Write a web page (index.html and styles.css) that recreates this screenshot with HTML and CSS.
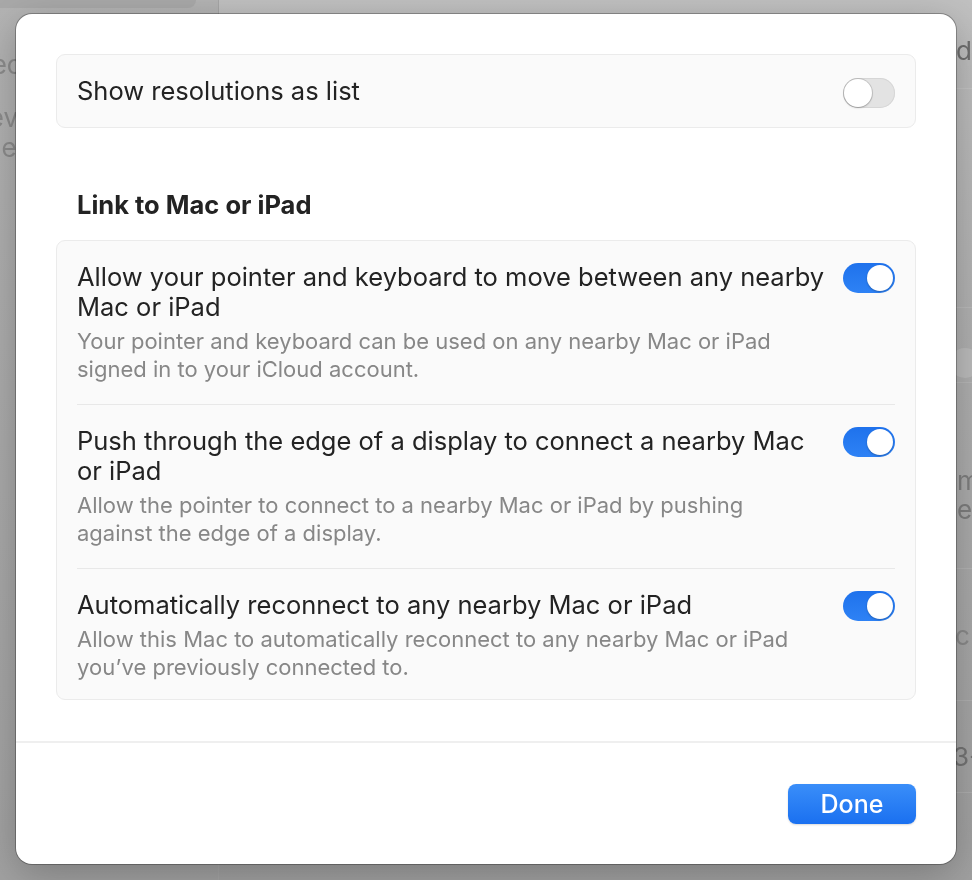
FILE: index.html
```html
<!DOCTYPE html>
<html lang="en">
<head>
    <meta charset="UTF-8">
    <title>Displays - Advanced</title>
    <link rel="stylesheet" href="styles.css">
</head>
<body>

    <!-- Dimmed settings window behind the sheet -->
    <div class="backdrop">
        <div class="backdrop-sidebar">
            <div class="sidebar-selected"></div>
        </div>
        <div class="backdrop-main">
            <div class="backdrop-line line-a"></div>
            <div class="backdrop-line line-b"></div>
            <div class="backdrop-line line-c"></div>
            <div class="backdrop-line line-d"></div>
            <div class="backdrop-line line-e"></div>
            <div class="backdrop-line line-f"></div>
            <div class="backdrop-knob"></div>
        </div>
        <span class="ghost ghost-1">Sec</span>
        <span class="ghost ghost-2">Dev</span>
        <span class="ghost ghost-3">Ne</span>
        <span class="ghost ghost-4">Add</span>
        <span class="ghost ghost-5">m</span>
        <span class="ghost ghost-6">er</span>
        <span class="ghost ghost-7">c</span>
        <span class="ghost ghost-8">3-</span>
    </div>

    <!-- Sheet -->
    <div class="sheet">
        <div class="sheet-body">
            <div class="card">
                <div class="row row-single">
                    <div class="row-text">
                        <div class="row-title">Show resolutions as list</div>
                    </div>
                    <div class="toggle"><span class="knob"></span></div>
                </div>
            </div>

            <h3 class="section-title">Link to Mac or iPad</h3>

            <div class="card">
                <div class="row">
                    <div class="row-text">
                        <div class="row-title">Allow your pointer and keyboard to move between any nearby Mac or iPad</div>
                        <div class="row-desc">Your pointer and keyboard can be used on any nearby Mac or iPad signed in to your iCloud account.</div>
                    </div>
                    <div class="toggle on"><span class="knob"></span></div>
                </div>
                <div class="row">
                    <div class="row-text">
                        <div class="row-title">Push through the edge of a display to connect a nearby Mac or iPad</div>
                        <div class="row-desc">Allow the pointer to connect to a nearby Mac or iPad by pushing against the edge of a display.</div>
                    </div>
                    <div class="toggle on"><span class="knob"></span></div>
                </div>
                <div class="row">
                    <div class="row-text">
                        <div class="row-title">Automatically reconnect to any nearby Mac or iPad</div>
                        <div class="row-desc">Allow this Mac to automatically reconnect to any nearby Mac or iPad you’ve previously connected to.</div>
                    </div>
                    <div class="toggle on"><span class="knob"></span></div>
                </div>
            </div>
        </div>

        <div class="sheet-footer">
            <button class="btn-done">Done</button>
        </div>
    </div>

</body>
</html>
```

FILE: styles.css
```css
/* General */
body {
    margin: 0;
    width: 972px;
    height: 880px;
    overflow: hidden;
    font-family: Inter, "Open Sans", sans-serif;
    background: #a9a9a9;
}

/* Backdrop window */
.backdrop {
    position: fixed;
    inset: 0;
    display: flex;
}

.backdrop-sidebar {
    width: 218px;
    background: linear-gradient(#b4b4b4, #a2a2a2);
    border-right: 1px solid #a6a6a6;
}

.sidebar-selected {
    width: 196px;
    height: 10px;
    margin-top: -2px;
    background: #a9a9a9;
    border-radius: 0 0 8px 0;
}

.backdrop-main {
    flex: 1;
    position: relative;
    background: linear-gradient(#c1c1c1, #b0b0b0 40%, #a1a1a1);
}

.backdrop-line {
    position: absolute;
    left: 0;
    right: 0;
    height: 1px;
    background: rgba(255, 255, 255, 0.12);
}

.line-a { top: 88px; }
.line-b { top: 307px; }
.line-c { top: 382px; }
.line-d { top: 568px; }
.line-e { top: 700px; }
.line-f { top: 792px; }

.backdrop-knob {
    position: absolute;
    right: -8px;
    top: 348px;
    width: 30px;
    height: 30px;
    border-radius: 50%;
    background: #bcbcbc;
}

.ghost {
    position: absolute;
    font-size: 26px;
    color: #8c8c8c;
    line-height: 30px;
}

.ghost-1 { left: -25px; top: 50px; }
.ghost-2 { left: -30px; top: 103px; }
.ghost-3 { left: -18px; top: 133px; }
.ghost-4 { left: 938px; top: 36px; color: #6e6e6e; }
.ghost-5 { left: 957px; top: 466px; color: #7e7e7e; }
.ghost-6 { left: 957px; top: 495px; color: #7e7e7e; }
.ghost-7 { left: 955px; top: 621px; color: #8a8a8a; }
.ghost-8 { left: 953px; top: 742px; color: #747474; }

/* Sheet */
.sheet {
    position: absolute;
    left: 16px;
    top: 14px;
    width: 940px;
    height: 850px;
    box-sizing: border-box;
    display: flex;
    flex-direction: column;
    background: #ffffff;
    border-radius: 16px;
    box-shadow: 0 0 0 1px rgba(0, 0, 0, 0.28), 0 10px 40px rgba(0, 0, 0, 0.25);
}

.sheet-body {
    flex: 1;
    padding: 40px 40px 0;
    border-bottom: 2px solid #efefef;
}

/* Cards */
.card {
    background: #fafafa;
    border: 1px solid #ebebeb;
    border-radius: 9px;
    padding: 0 20px;
}

.row {
    display: flex;
    align-items: flex-start;
    gap: 12px;
    padding: 21px 0;
}

.row:last-child {
    padding-bottom: 18px;
}

.row + .row {
    border-top: 1px solid #e8e8e8;
}

.row-single {
    align-items: center;
    padding: 21px 0;
}

.row-single:last-child {
    padding-bottom: 21px;
}

.row-text {
    flex: 1;
    min-width: 0;
}

.row-title {
    font-size: 25.5px;
    line-height: 30px;
    color: #232323;
}

.row-desc {
    margin-top: 5px;
    padding-right: 10px;
    font-size: 22px;
    line-height: 28px;
    color: #878787;
}

.section-title {
    margin: 62px 0 20px;
    padding-left: 21px;
    font-size: 25.5px;
    line-height: 30px;
    font-weight: 700;
    color: #232323;
}

/* Switch */
.toggle {
    flex: none;
    position: relative;
    width: 52px;
    height: 30px;
    margin-top: 1px;
    border-radius: 15px;
    background: #e3e3e3;
    box-shadow: inset 0 0 0 1px #d6d6d6;
}

.row-single .toggle {
    margin-top: 0;
    transform: translateY(2px);
}

.knob {
    position: absolute;
    top: 1px;
    left: 1px;
    width: 28px;
    height: 28px;
    border-radius: 50%;
    background: #ffffff;
    box-shadow: 0 0 0 1px rgba(0, 0, 0, 0.12), 0 1px 2px rgba(0, 0, 0, 0.2);
}

.toggle.on {
    background: linear-gradient(#1f72ec, #2e82f5);
    box-shadow: none;
}

.toggle.on .knob {
    top: 2px;
    left: 24px;
    width: 26px;
    height: 26px;
    box-shadow: 0 1px 2px rgba(0, 0, 0, 0.25);
}

/* Footer */
.sheet-footer {
    display: flex;
    justify-content: flex-end;
    padding: 41px 40px 40px;
}

.btn-done {
    width: 128px;
    height: 40px;
    border: none;
    border-radius: 8px;
    background: linear-gradient(#3a8ef9, #1a70f0);
    box-shadow: 0 1px 2px rgba(0, 0, 0, 0.15);
    color: #ffffff;
    font-family: Inter, "Open Sans", sans-serif;
    font-size: 25px;
    font-weight: 500;
    cursor: pointer;
}
```
